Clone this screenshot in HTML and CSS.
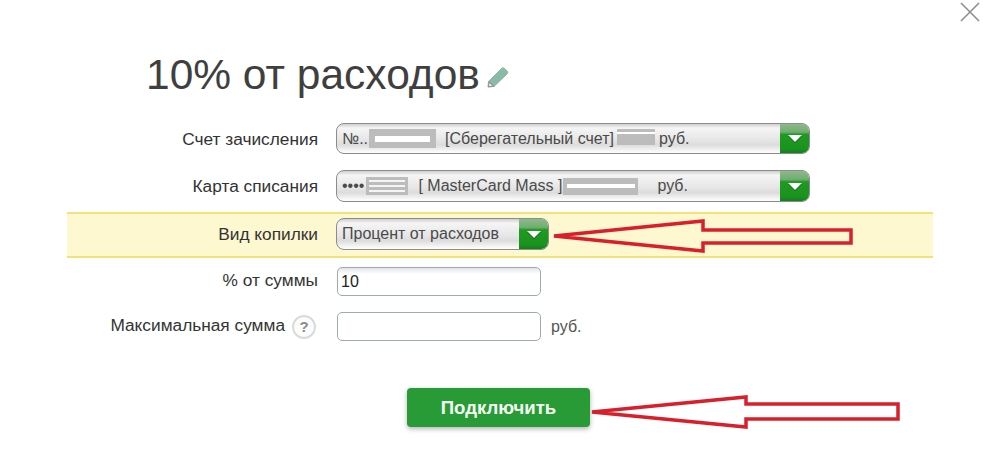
FILE: index.html
```html
<!DOCTYPE html>
<html lang="ru">
  <head>
    <meta charset="utf-8" />
    <title>10% от расходов</title>
    <link rel="stylesheet" href="styles.css">
  </head>
  <body>
    <div class="dialog">
      <!-- close icon -->
      <svg class="close-icon" width="22" height="22" viewBox="0 0 22 22" fill="none">
        <path d="M2 2L20 20M20 2L2 20" stroke="#8f8f8f" stroke-width="1.6"/>
      </svg>

      <h1 class="title">
        10% от расходов
        <svg class="edit-icon" width="22" height="22" viewBox="0 0 22 22">
          <path d="M1.500 15.500L14.500 2.500C15.500 1.500 16.500 1.500 17.500 2.500L20 5C21 6 21 7 20 8L7 20.500L1 21Z" fill="#86bda6" stroke="#a3aca8" stroke-width="1"/>
          <path d="M2 16L6.500 20L1.500 20.500Z" fill="#fff" stroke="#8f9794" stroke-width="1.200"/>
        </svg>
      </h1>

      <div class="form">
        <div class="row row-first">
          <label class="row-label">Счет зачисления</label>
          <div class="select select-wide">
            <div class="select-value">
              <span>№..</span>
              <span class="mask mask-a"></span>
              <span class="select-part-a">[Сберегательный счет]</span>
              <span class="mask mask-b"></span>
              <span class="rub-a">руб.</span>
            </div>
            <div class="select-button"><span class="select-caret"></span></div>
          </div>
        </div>

        <div class="row row-second">
          <label class="row-label">Карта списания</label>
          <div class="select select-wide">
            <div class="select-value">
              <span>••••</span>
              <span class="mask mask-c"></span>
              <span class="select-part-b">[ MasterCard Mass ]</span>
              <span class="mask mask-d"></span>
              <span class="rub-b">руб.</span>
            </div>
            <div class="select-button"><span class="select-caret"></span></div>
          </div>
        </div>

        <div class="row row-highlight">
          <label class="row-label">Вид копилки</label>
          <div class="select select-short">
            <div class="select-value">Процент от расходов</div>
            <div class="select-button"><span class="select-caret"></span></div>
          </div>
        </div>

        <div class="row row-input">
          <label class="row-label">% от суммы</label>
          <input class="text-input" type="text" value="10" />
        </div>

        <div class="row row-input row-last">
          <label class="row-label">
            Максимальная сумма
            <span class="help-icon">?</span>
          </label>
          <input class="text-input text-input-empty" type="text" />
          <span class="unit">руб.</span>
        </div>

        <div class="actions">
          <button class="submit-button" type="button">Подключить</button>
        </div>
      </div>

      <!-- red arrows drawn over the screenshot -->
      <svg class="arrows" width="1000" height="461" viewBox="0 0 1000 461" fill="none">
        <path d="M554 236L703 221V230H851V243H703V251Z" stroke="#d8202c" stroke-width="3.500"/>
        <path d="M592 412L746 397V404H898V419H746V427Z" stroke="#d8202c" stroke-width="3.500"/>
      </svg>
    </div>
  </body>
</html>
```

FILE: styles.css
```css
* {
  box-sizing: border-box;
}

html,
body {
  margin: 0;
  height: 461px;
  overflow: hidden;
  background: #fff;
}

.dialog {
  position: relative;
  height: 461px;
  font-family: "Liberation Sans", Arial, sans-serif;
  color: #333;
}

.close-icon {
  position: absolute;
  top: 1px;
  right: 19px;
}

.title {
  display: flex;
  align-items: center;
  gap: 7px;
  height: 123px;
  margin: 0;
  padding: 26px 0 0 146px;
  font-size: 42.500px;
  font-weight: 400;
  color: #3f3f3f;
}

.edit-icon {
  margin-top: 5px;
}

.form {
  margin: 0 67px;
}

.row {
  display: flex;
  align-items: center;
}

.row-label {
  display: flex;
  align-items: center;
  justify-content: flex-end;
  flex: none;
  gap: 7px;
  width: 251px;
  margin-right: 18px;
  font-size: 17.300px;
  color: #333;
}

.row-first {
  height: 31px;
  margin-bottom: 16px;
}

.row-first .row-label {
  padding-top: 2px;
}

.row-second {
  height: 32px;
  margin-bottom: 10px;
}

.row-highlight {
  height: 46px;
  margin-bottom: 9px;
  padding-bottom: 2px;
  background: #fdf8d0;
  border-top: 2px solid #f2e27a;
  border-bottom: 2px solid #f2e27a;
}

.row-input {
  height: 29px;
  margin-bottom: 16px;
}

.row-input .row-label {
  padding-bottom: 3px;
}

.row-last {
  margin-bottom: 0;
}

.select {
  display: flex;
  height: 32px;
  overflow: hidden;
  background: linear-gradient(#cfcfcf, #f5f5f5 14%, #e6e6e6 55%, #dcdcdc 72%, #fff);
  border: 1px solid #8c8c8c;
  border-radius: 8px;
  font-size: 16px;
  color: #4a4a4a;
}

.select-wide {
  width: 474px;
}

.row-first .select {
  height: 31px;
}

.select-short {
  width: 213px;
}

.select-value {
  display: flex;
  align-items: center;
  flex: 1;
  min-width: 0;
  padding-left: 5px;
  white-space: nowrap;
}

.select-button {
  display: flex;
  align-items: center;
  justify-content: center;
  flex: none;
  width: 29px;
  background: linear-gradient(#8db88b, #6fae70 28%, #1f9a22 36%, #1b931f 85%, #147f1a);
}

.select-caret {
  width: 0;
  height: 0;
  border-top: 7px solid #fff;
  border-left: 7px solid transparent;
  border-right: 7px solid transparent;
  filter: drop-shadow(0 1px 0 #0b5e10);
}

/* grey blocks hiding account numbers */
.mask {
  display: block;
  flex: none;
  background: #bcbcbc;
}

.mask-a {
  width: 67px;
  height: 19px;
  margin-left: 1px;
  background: linear-gradient(#fff, #fff) center / 55px 6px no-repeat, #bcbcbc;
}

.mask-b {
  width: 38px;
  height: 16px;
  margin-top: -3px;
  margin-left: 3px;
  background: linear-gradient(#fff, #fff) center 3px / 38px 2px no-repeat, #bcbcbc;
}

.mask-c {
  width: 42px;
  height: 18px;
  margin-left: 2px;
  background: linear-gradient(#f4f4f4, #f4f4f4) center 3px / 36px 2px no-repeat,
    linear-gradient(#f4f4f4, #f4f4f4) center 8px / 36px 2px no-repeat,
    linear-gradient(#f4f4f4, #f4f4f4) center 13px / 36px 2px no-repeat, #bcbcbc;
}

.mask-d {
  width: 75px;
  height: 17px;
  margin-left: 1px;
  background: linear-gradient(#fff, #fff) center 6px / 68px 4px no-repeat, #bcbcbc;
}

.select-part-a {
  margin-left: 9px;
}

.select-part-b {
  margin-left: 10px;
}

.rub-a {
  margin-left: 4px;
}

.rub-b {
  margin-left: 19px;
}

.text-input {
  width: 204px;
  height: 29px;
  margin: 0 0 0 1px;
  padding: 1px 3px 0;
  background: linear-gradient(#e0e4ea, #fff 22%);
  border: 1px solid #9eabb5;
  border-radius: 5px;
  font-family: inherit;
  font-size: 16px;
  color: #222;
  outline: none;
}

.text-input-empty {
  background: #fff;
}

.unit {
  margin-left: 10px;
  font-size: 16px;
  color: #555;
}

.help-icon {
  display: flex;
  align-items: center;
  justify-content: center;
  width: 24px;
  height: 24px;
  margin-top: 3px;
  margin-right: 2px;
  background: #fcfcfc;
  border: 2px solid #dadada;
  border-radius: 50%;
  font-size: 15px;
  font-weight: 700;
  color: #8a8a8a;
}

.actions {
  margin-top: 47px;
  padding-left: 340px;
}

.submit-button {
  width: 183px;
  height: 39px;
  padding: 0;
  background: #289a36;
  border: 0;
  border-radius: 4px;
  box-shadow: 0 2px 5px rgba(0,0,0,0.3);
  font-family: inherit;
  font-size: 18.600px;
  font-weight: 700;
  color: #f4fff4;
}

.arrows {
  position: absolute;
  top: 0;
  left: 0;
  pointer-events: none;
}
```
